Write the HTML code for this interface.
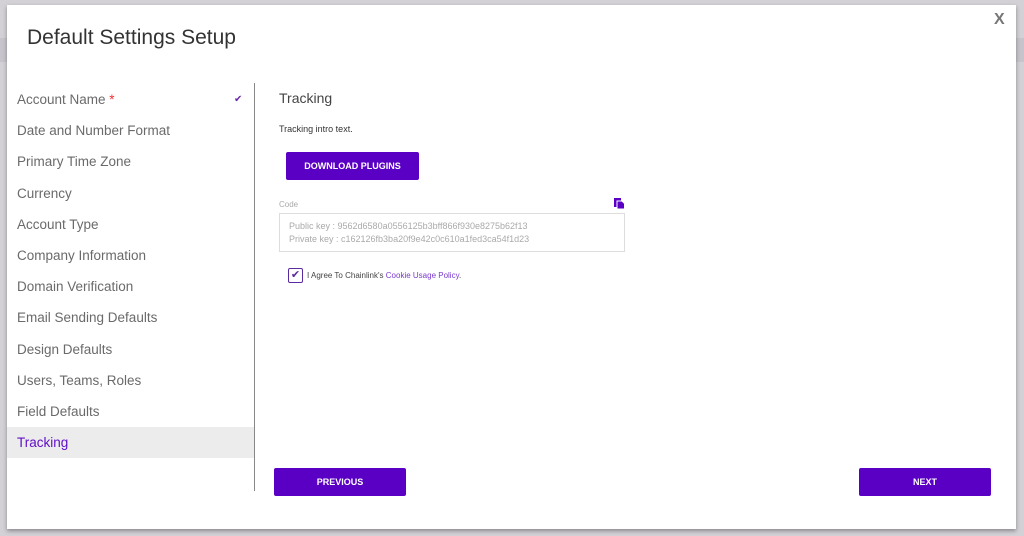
<!DOCTYPE html>
<html><head><style>
body{margin:0;width:1024px;height:536px;background:#d3d0d6;font-family:"Liberation Sans",sans-serif;position:relative;overflow:hidden}
.bgbar{position:absolute;left:0;top:38px;width:1024px;height:24px;background:#c8c4cc}
.modal{position:absolute;left:7px;top:5px;width:1009px;height:524px;background:#fff;box-shadow:0 2px 4px rgba(0,0,0,.35)}
.t{position:absolute;left:20px;top:21px;font-size:21px;color:#333}
.x{position:absolute;left:987px;top:6px;font-size:16px;font-weight:bold;color:#777}
.side{position:absolute;left:0;top:79px;width:247px}
.it{height:31.2px;line-height:31px;padding-left:10px;font-size:13.5px;color:#6a6a6a;position:relative}
.it.a{background:#ececec;color:#6010c8}
.div{position:absolute;left:247px;top:78px;width:1px;height:408px;background:#888}
.btn{position:absolute;background:#5a00c4;color:#fff;font-size:9px;font-weight:bold;text-align:center;border-radius:2px}
</style></head><body>
<div class="bgbar"></div>
<div class="modal">
<div class="t">Default Settings Setup</div>
<div class="x">X</div>
<div class="side">
<div class="it">Account Name <span style="color:#e33">*</span><span style="position:absolute;left:227px;color:#6a2aa8;font-size:10px">✔</span></div>
<div class="it">Date and Number Format</div>
<div class="it">Primary Time Zone</div>
<div class="it">Currency</div>
<div class="it">Account Type</div>
<div class="it">Company Information</div>
<div class="it">Domain Verification</div>
<div class="it">Email Sending Defaults</div>
<div class="it">Design Defaults</div>
<div class="it">Users, Teams, Roles</div>
<div class="it">Field Defaults</div>
<div class="it a">Tracking</div>
</div>
<div class="div"></div>
<div style="position:absolute;left:272px;top:85px;font-size:14px;color:#444">Tracking</div>
<div style="position:absolute;left:272px;top:119px;font-size:9px;color:#333">Tracking intro text.</div>
<div class="btn" style="left:279px;top:147px;width:133px;height:28px;line-height:28px">DOWNLOAD PLUGINS</div>
<div style="position:absolute;left:272px;top:195px;font-size:8px;color:#aaa">Code</div>
<svg style="position:absolute;left:607px;top:193px" width="11" height="11" viewBox="0 0 11 11"><rect x="0" y="0" width="7" height="9" fill="#5a00c4"/><path d="M3 3H8L10.5 5.5V11H3Z" fill="#5a00c4" stroke="#fff" stroke-width="1"/></svg>
<div style="position:absolute;left:272px;top:208px;font-size:9px;color:#aaa;line-height:12.5px;padding:6px 0 0 9px;box-sizing:border-box;width:346px;height:39px;border:1px solid #ddd">Public key : 9562d6580a0556125b3bff866f930e8275b62f13<br>Private key : c162126fb3ba20f9e42c0c610a1fed3ca54f1d23</div>
<div style="position:absolute;left:281px;top:263px;width:13px;height:13px;border:1px solid #5a2aa0;border-radius:2px;color:#5a2aa0;font-size:11px;line-height:13px;text-align:center">✔</div>
<div style="position:absolute;left:300px;top:266px;font-size:8px;color:#444">I Agree To Chainlink's <span style="color:#7a3ad0">Cookie Usage Policy</span>.</div>
<div class="btn" style="left:267px;top:463px;width:132px;height:28px;line-height:28px">PREVIOUS</div>
<div class="btn" style="left:852px;top:463px;width:132px;height:28px;line-height:28px">NEXT</div>
</div>
</body></html>
